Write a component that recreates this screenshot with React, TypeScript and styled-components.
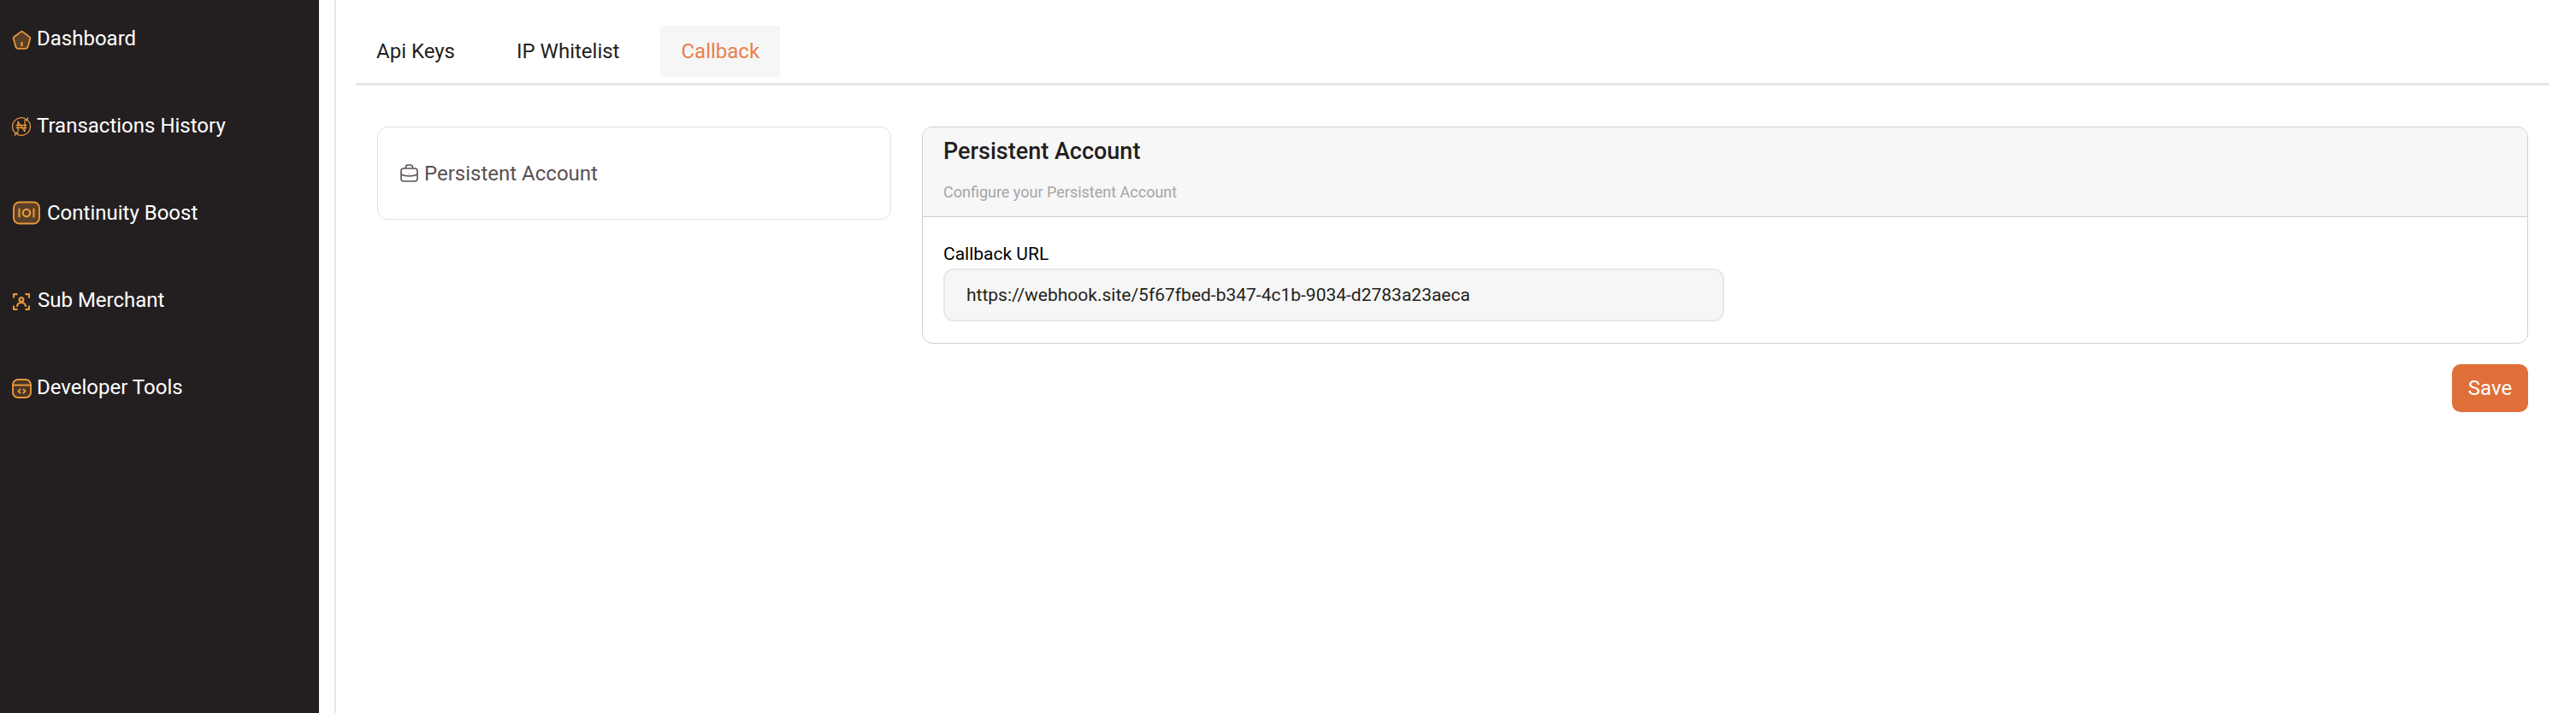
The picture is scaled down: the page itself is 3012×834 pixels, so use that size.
import styled, { createGlobalStyle } from "styled-components"

const GlobalStyle = createGlobalStyle`
	html, body {
		margin: 0;
		padding: 0;
		background: #ffffff;
		font-family: Roboto, "Liberation Sans", sans-serif;
	}
	* {
		box-sizing: border-box;
	}
`

const Page = styled.div`
	display: flex;
	width: 3012px;
	height: 834px;
	overflow: hidden;
	background: #ffffff;
`

const Sidebar = styled.nav`
	flex: 0 0 373px;
	display: flex;
	flex-direction: column;
	gap: 72px;
	padding: 30px 0 0 13px;
	background: #231f20;
`

const NavItem = styled.div<{ $gap: number }>`
	display: flex;
	align-items: center;
	gap: ${(p) => p.$gap}px;
	height: 30px;
	color: #ffffff;
	font-size: 24px;
	line-height: 30px;
	white-space: nowrap;
`

const NavIcon = styled.svg<{ $left?: number; $drop?: number; $stroke?: number }>`
	flex-shrink: 0;
	margin-left: ${(p) => p.$left ?? 0}px;
	margin-top: ${(p) => p.$drop ?? 0}px;
	fill: none;
	stroke: #e8963a;
	stroke-width: ${(p) => p.$stroke ?? 1.9};
	stroke-linecap: round;
	stroke-linejoin: round;
`

const Main = styled.main`
	flex: 1;
	margin-left: 18px;
	padding-right: 32px;
	border-left: 2px solid #e8e8e8;
	min-width: 0;
`

const Tabs = styled.div`
	display: flex;
	gap: 24px;
	margin-left: 23px;
	padding: 30px 0 7px;
	border-bottom: 3px solid #e6e6e6;
`

const Tab = styled.div<{ $active?: boolean }>`
	height: 60px;
	padding: 0 24px;
	color: ${(p) => (p.$active ? "#e87f4c" : "#231f20")};
	background: ${(p) => (p.$active ? "#f6f6f6" : "transparent")};
	font-size: 24px;
	line-height: 60px;
`

const Content = styled.div`
	display: grid;
	grid-template-columns: 601px 1fr;
	gap: 36px;
	align-items: start;
	padding: 48px 24px 0 48px;
`

const AccountCard = styled.div`
	display: flex;
	align-items: center;
	gap: 7px;
	height: 109px;
	padding-left: 26px;
	border: 1px solid #e3e3e6;
	border-radius: 12px;
	color: #5a5052;
	font-size: 24px;
`

const Panel = styled.section`
	border: 1px solid #cfcfcf;
	border-radius: 12px;
	overflow: hidden;
`

const PanelHeader = styled.header`
	height: 105px;
	padding: 12px 24px 0;
	background: #f7f7f7;
	border-bottom: 1px solid #cfcfcf;
`

const PanelTitle = styled.h2`
	margin: 0;
	color: #231f20;
	font-size: 27px;
	font-weight: 500;
	line-height: 32px;
`

const PanelHint = styled.p`
	margin: 21px 0 0;
	color: #a8a3a5;
	font-size: 18px;
	line-height: 22px;
`

const PanelBody = styled.div`
	height: 147px;
	padding: 31px 24px 0;
`

const FieldLabel = styled.div`
	color: #000000;
	font-size: 21px;
	line-height: 24px;
`

const FieldValue = styled.div`
	width: 913px;
	height: 62px;
	margin-top: 5px;
	padding-left: 25px;
	border: 2px solid #e8e8e8;
	border-radius: 12px;
	background: #f6f6f6;
	color: #231f20;
	font-size: 21px;
	line-height: 58px;
`

const Actions = styled.div`
	display: flex;
	justify-content: flex-end;
	margin-top: 24px;
`

const SaveButton = styled.button`
	width: 89px;
	height: 56px;
	padding: 0;
	border: none;
	border-radius: 10px;
	background: #e06f3a;
	color: #ffffff;
	font-family: inherit;
	font-size: 24px;
	font-weight: 400;
`

const HomeIcon = () => (
	<NavIcon $left={1} $drop={4} width="23" height="23" viewBox="0 0 24 24">
		<path
			d="M10.200 1.700a3 3 0 0 1 3.600 0l7.400 5.500a2.600 2.600 0 0 1 .9 2.900l-2.800 9.400a3 3 0 0 1-2.900 2.200H7.600a3 3 0 0 1-2.900-2.200L1.900 10.100a2.600 2.600 0 0 1 .9-2.900z"
			fill="#e8963a"
			fillOpacity="0.28"
		/>
		<path d="M12 14.500v3.500" strokeWidth="2.400" />
	</NavIcon>
)

const TransactionIcon = () => (
	<NavIcon $stroke={1.3} $drop={2} width="24" height="24" viewBox="0 0 24 24">
		<path d="M18.500 4A10.500 10.500 0 0 0 1.500 12c0 2.400.8 4.600 2.200 6.400" />
		<path d="M5.500 20A10.500 10.500 0 0 0 22.500 12c0-2.400-.8-4.600-2.200-6.400" />
		<path d="M19.500 1.600l-.4 3.400-3.200-.6M4.500 22.400l.4-3.400 3.200.6" />
		<path d="M8 18V6l8 12V6M6 10.500h12M6 13.500h12" />
	</NavIcon>
)

const BoostIcon = () => (
	<NavIcon $left={2} width="32" height="28" viewBox="0 0 32 28">
		<rect x="1" y="1.500" width="30" height="25" rx="6.500" fill="#e8963a" fillOpacity="0.28" />
		<path d="M7.500 9.500v9M24.500 9.500v9" strokeWidth="2.200" />
		<circle cx="16" cy="14" r="4.200" strokeWidth="2.200" />
	</NavIcon>
)

const MerchantIcon = () => (
	<NavIcon $stroke={2.2} $left={2} $drop={3} width="20" height="20" viewBox="0 0 20 20">
		<path d="M1 5.500V1.200h4.500M14.500 1.200H19v4.300M1 14.500v4.300h4.500M14.500 18.800H19v-4.300" strokeLinecap="butt" />
		<circle cx="10" cy="7.500" r="2.400" />
		<path d="M5 15c.6-2.800 2.600-4 5-4s4.400 1.200 5 4" />
	</NavIcon>
)

const DeveloperIcon = () => (
	<NavIcon $left={1} $drop={3} width="23" height="23" viewBox="0 0 23 23">
		<rect x="1" y="1" width="21" height="21" rx="6" fill="#e8963a" fillOpacity="0.2" />
		<path d="M1 7.500h21" />
		<path d="M9.500 12.500l-2 2 2 2M13.500 12.500l2 2-2 2" strokeWidth="2" />
	</NavIcon>
)

const BriefcaseIcon = () => (
	<svg width="21" height="21" viewBox="0 0 21 21" fill="none" stroke="#5a5052" strokeWidth="1.6" strokeLinejoin="round">
		<rect x="1" y="5" width="19" height="15" rx="3" />
		<path d="M6.500 5V3.500A2.500 2.500 0 0 1 9 1h3a2.500 2.500 0 0 1 2.500 2.500V5" />
		<path d="M1 12c3 1.600 6 2 9.500 2s6.500-.4 9.500-2" />
		<path d="M10.500 11.500v.6" strokeWidth="1.800" />
	</svg>
)

const App = () => (
	<>
		<GlobalStyle />
		<Page>
			<Sidebar>
				<NavItem $gap={6}>
					<HomeIcon />
					Dashboard
				</NavItem>
				<NavItem $gap={6}>
					<TransactionIcon />
					Transactions History
				</NavItem>
				<NavItem $gap={8}>
					<BoostIcon />
					Continuity Boost
				</NavItem>
				<NavItem $gap={9}>
					<MerchantIcon />
					Sub Merchant
				</NavItem>
				<NavItem $gap={6}>
					<DeveloperIcon />
					Developer Tools
				</NavItem>
			</Sidebar>
			<Main>
				<Tabs>
					<Tab>Api Keys</Tab>
					<Tab>IP Whitelist</Tab>
					<Tab $active>Callback</Tab>
				</Tabs>
				<Content>
					<AccountCard>
						<BriefcaseIcon />
						Persistent Account
					</AccountCard>
					<div>
						<Panel>
							<PanelHeader>
								<PanelTitle>Persistent Account</PanelTitle>
								<PanelHint>Configure your Persistent Account</PanelHint>
							</PanelHeader>
							<PanelBody>
								<FieldLabel>Callback URL</FieldLabel>
								<FieldValue>https://webhook.site/5f67fbed-b347-4c1b-9034-d2783a23aeca</FieldValue>
							</PanelBody>
						</Panel>
						<Actions>
							<SaveButton>Save</SaveButton>
						</Actions>
					</div>
				</Content>
			</Main>
		</Page>
	</>
)

export default App
